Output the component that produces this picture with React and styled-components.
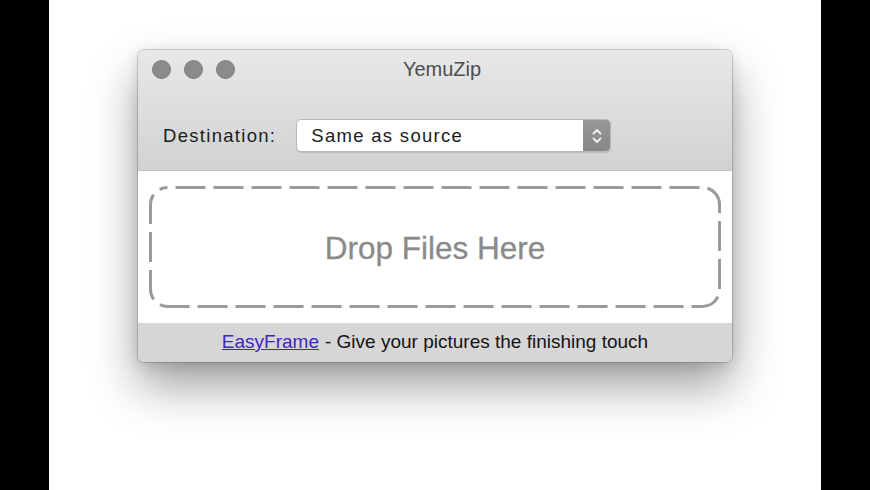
import React from 'react';
import styled, { createGlobalStyle } from 'styled-components';

const GlobalStyle = createGlobalStyle`
  html, body {
    margin: 0;
    padding: 0;
    background: #000;
  }
  * {
    box-sizing: border-box;
  }
`;

const Stage = styled.div`
  width: 772px;
  height: 490px;
  margin: 0 auto;
  padding-top: 50px;
  background: #fff;
  font-family: "Liberation Sans", Arial, sans-serif;
`;

const Window = styled.div`
  width: 594px;
  height: 312px;
  margin: 0 auto;
  display: flex;
  flex-direction: column;
  border-radius: 6px;
  overflow: hidden;
  box-shadow:
    0 0 0 1px rgba(0, 0, 0, 0.16),
    0 24px 48px rgba(0, 0, 0, 0.38),
    0 4px 14px rgba(0, 0, 0, 0.12);
`;

const Header = styled.div`
  background: linear-gradient(#e8e8e8, #d2d2d2);
  border-bottom: 1px solid #c4c4c4;
`;

const TitleBar = styled.div`
  height: 38px;
  display: grid;
  grid-template-columns: 1fr auto 1fr;
  align-items: center;
  padding-left: 14px;
`;

const Lights = styled.div`
  display: flex;
  gap: 13px;
`;

const Light = styled.span`
  width: 19px;
  height: 19px;
  border-radius: 50%;
  background: #8b8b8b;
  border: 1px solid #7c7c7c;
`;

const Title = styled.div`
  font-size: 20px;
  color: #4d4d4d;
`;

const Toolbar = styled.div`
  display: flex;
  align-items: center;
  gap: 20px;
  padding: 31px 0 18px 25px;
`;

const Label = styled.span`
  font-size: 18.5px;
  letter-spacing: 1.3px;
  color: #1c1c1c;
`;

const Popup = styled.div`
  width: 315px;
  height: 33px;
  display: flex;
  align-items: stretch;
  border-radius: 5px;
  overflow: hidden;
  background: #fff;
  border: 1px solid #b8b8b8;
  box-shadow: 0 1px 1px rgba(0, 0, 0, 0.12);
`;

const PopupValue = styled.span`
  flex: 1;
  display: flex;
  align-items: center;
  padding-left: 14px;
  font-size: 18.5px;
  letter-spacing: 1.3px;
  color: #1c1c1c;
`;

const Stepper = styled.span`
  width: 27px;
  display: flex;
  align-items: center;
  justify-content: center;
  background: linear-gradient(#979797, #878787);
`;

const Content = styled.div`
  flex: 1;
  background: #fff;
  padding: 15px 11px 15px 11px;
  display: flex;
`;

const DropZone = styled.div`
  position: relative;
  flex: 1;
  display: flex;
  align-items: center;
  justify-content: center;
`;

const DashFrame = styled.svg`
  position: absolute;
  inset: 0;
  width: 100%;
  height: 100%;
  overflow: visible;
`;

const DropText = styled.span`
  font-size: 31.5px;
  color: #8a8a8a;
  margin-top: 2px;
  -webkit-text-stroke: 0.3px #8a8a8a;
`;

const Footer = styled.div`
  height: 39px;
  background: #d6d6d6;
  display: flex;
  align-items: center;
  justify-content: center;
  padding-bottom: 1px;
  font-size: 19px;
  color: #141414;
`;

const Link = styled.a`
  color: #3d27c6;
  text-decoration: underline;
  margin-right: 6px;
`;

const App = () => (
  <>
    <GlobalStyle />
    <Stage>
      <Window>
        <Header>
          <TitleBar>
            <Lights>
              <Light />
              <Light />
              <Light />
            </Lights>
            <Title>YemuZip</Title>
            <span />
          </TitleBar>
          <Toolbar>
            <Label>Destination:</Label>
            <Popup>
              <PopupValue>Same as source</PopupValue>
              <Stepper>
                <svg width="12" height="20" viewBox="0 0 12 20" fill="none">
                  <path d="M2.5 7.5 L6 4 L9.5 7.5" stroke="#f2f2f2" strokeWidth="1.8" strokeLinecap="round" strokeLinejoin="round" />
                  <path d="M2.5 12.5 L6 16 L9.5 12.5" stroke="#f2f2f2" strokeWidth="1.8" strokeLinecap="round" strokeLinejoin="round" />
                </svg>
              </Stepper>
            </Popup>
          </Toolbar>
        </Header>
        <Content>
          <DropZone>
            <DashFrame>
              <rect
                x="1.5"
                y="1.5"
                width="calc(100% - 3px)"
                height="calc(100% - 3px)"
                rx="17"
                fill="none"
                stroke="#9a9a9a"
                strokeWidth="3"
                strokeDasharray="30 8"
                strokeDashoffset="-8"
              />
            </DashFrame>
            <DropText>Drop Files Here</DropText>
          </DropZone>
        </Content>
        <Footer>
          <Link href="#">EasyFrame</Link>- Give your pictures the finishing touch
        </Footer>
      </Window>
    </Stage>
  </>
);

export default App;
